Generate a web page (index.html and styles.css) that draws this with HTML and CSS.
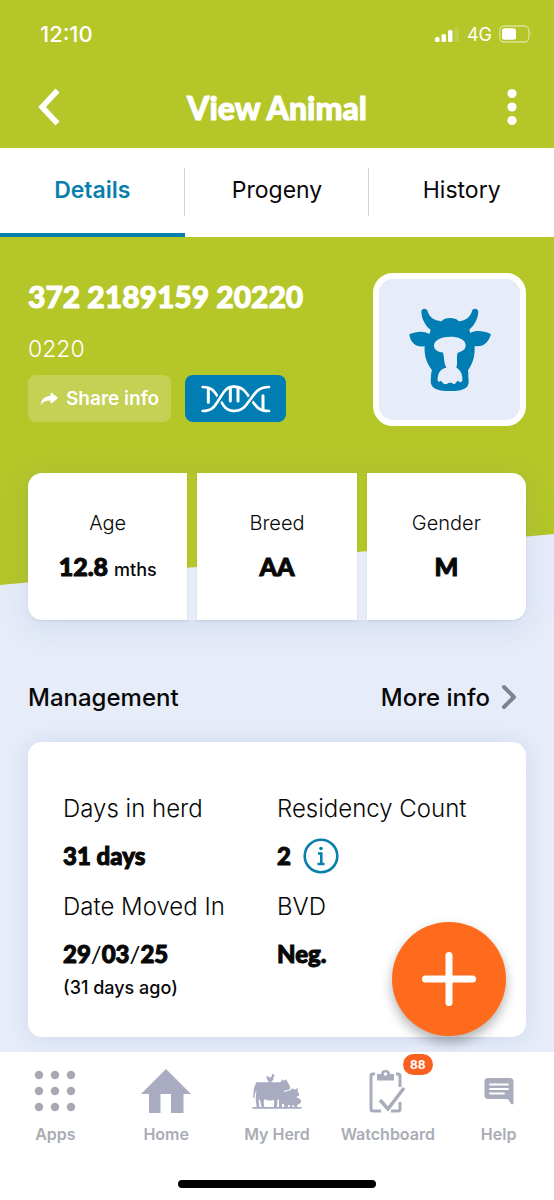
FILE: index.html
```html
<!DOCTYPE html>
<html lang="en">
<head>
<meta charset="utf-8">
<meta name="viewport" content="width=device-width, initial-scale=1">
<title>View Animal</title>
<link rel="stylesheet" href="styles.css">
</head>
<body>
<div class="app">
  <header class="top">
    <div class="status">
      <time class="clock">12:10</time>
      <div class="signals">
        <svg width="25" height="16" viewBox="0 0 25 16" fill="#fff" aria-hidden="true">
          <rect x="0" y="11" width="4.500" height="5" rx="1.500"/><rect x="6.500" y="8" width="4.500" height="8" rx="1.500"/><rect x="13" y="4" width="4.500" height="12" rx="1.500"/><rect x="19.500" y="1" width="4.500" height="15" rx="1.500" opacity=".15"/>
        </svg>
        <span>4G</span>
        <svg width="34" height="18" viewBox="0 0 34 18" aria-hidden="true">
          <rect x=".8" y="1" width="29" height="16" rx="4.500" fill="none" stroke="#fff" stroke-opacity=".5" stroke-width="1.300"/><rect x="3" y="3.300" width="14" height="11.400" rx="2.500" fill="#fff"/><path d="M31.500 6.500q1.800 2.500 0 5z" fill="#fff" opacity=".5"/>
        </svg>
      </div>
    </div>
    <div class="titlebar">
      <button class="icon-button" aria-label="Back"><svg width="24" height="38" viewBox="0 0 24 38" fill="none" stroke="#fff" stroke-width="5.500"><path d="M20.500 2.500 5 19l15.500 16.500"/></svg></button>
      <h1>View Animal</h1>
      <button class="icon-button" aria-label="More options"><svg width="10" height="38" viewBox="0 0 10 38" fill="#fff"><circle cx="5" cy="5.500" r="4.600"/><circle cx="5" cy="19" r="4.600"/><circle cx="5" cy="32.500" r="4.600"/></svg></button>
    </div>
  </header>

  <nav class="tabs" aria-label="Animal">
    <a class="tab active" href="#details" aria-current="page">Details</a>
    <a class="tab" href="#progeny">Progeny</a>
    <a class="tab" href="#history">History</a>
  </nav>

  <main class="content" id="details">
    <section class="identity">
      <div class="identity-text">
        <h2>372 2189159 20220</h2>
        <p class="short-id">0220</p>
        <div class="actions">
          <button class="share"><svg width="18" height="14" viewBox="0 0 18 14" fill="#fff" aria-hidden="true"><path d="M10.500 1.300Q11 .3 12 1l5.300 4.300q.8.700 0 1.400L12 11q-1 .7-1.500-.3V8.600Q4.500 8.300.5 13 .8 5 10.500 3.700z"/></svg>Share info</button>
          <button class="dna" aria-label="DNA"><svg width="70" height="28" viewBox="13 14 210 84" fill="none" stroke="#fff" stroke-linecap="round" stroke-width="8" aria-hidden="true">
            <path d="M35 24v42M101 22v40M124 22v40M199 46v42" stroke-width="9"/>
            <path d="M18 20c32 0 38 18 50 36s18 36 44 36"/>
            <path d="M112 19c28 0 36 18 50 37s22 36 55 36"/>
            <path d="M18 92c32 0 38-18 50-36s18-37 44-37M112 92c28 0 36-18 50-36s22-36 55-36" stroke="#007eb4" stroke-width="18" stroke-linecap="butt" stroke-dasharray="0 44 34 200"/>
            <path d="M18 92c32 0 38-18 50-36s18-37 44-37M112 92c28 0 36-18 50-36s22-36 55-36"/>
          </svg></button>
        </div>
      </div>
      <div class="avatar"><svg width="84" height="86" viewBox="142 138 252 258" role="img" aria-label="Cow">
        <path fill="#007eb4" d="M182 153c0-12 16-13 19-2 5 18 18 28 42 30 8-13 43-13 51 0 22-2 35-13 40-31 3-10 19-8 19 3-2 22-11 39-27 53l3 10c17-10 39-6 60 2 3 0 1 6-1 9-8 21-23 31-46 28 1 28-4 50-20 73 2 10 0 20 2 31 2 25-22 31-56 31s-59-6-58-31c2-13 0-22 4-31-16-21-24-45-22-72-25 4-43-9-46-36 22-9 42-11 60-1l4-12c-16-13-27-32-28-54z"/>
        <path fill="#e6ecf8" d="M220 254c0-34 92-36 95-3 1 14-10 20-24 24-5 15 1 31-4 45 11 6 20 19 18 40-5 6-9 3-13-1-5 3-7 7-10 10h-4c-4-5-15-5-19 0h-9c-3-3-7-8-10-10-5 6-9 3-9-1-1-22 10-36 26-38-9-16-5-34-11-46-15-1-26-9-26-20z"/>
      </svg></div>
    </section>

    <dl class="facts">
      <div class="fact"><dt>Age</dt><dd>12.8 <small>mths</small></dd></div>
      <div class="fact"><dt>Breed</dt><dd>AA</dd></div>
      <div class="fact"><dt>Gender</dt><dd>M</dd></div>
    </dl>

    <section class="management">
      <div class="section-head">
        <h3>Management</h3>
        <a href="#more">More info <svg width="16" height="26" viewBox="0 0 16 26" fill="none" stroke="#7d828c" stroke-width="4" stroke-linecap="round" stroke-linejoin="round" aria-hidden="true"><path d="m3 3 10 10L3 23"/></svg></a>
      </div>
      <dl class="card">
        <div><dt>Days in herd</dt><dd>31 days</dd></div>
        <div><dt>Residency Count</dt><dd>2 <button class="info" aria-label="About residency count"><svg width="36" height="36" viewBox="0 0 36 36" fill="none" stroke="#087fac" stroke-width="2.600"><circle cx="18" cy="18" r="16.300"/><path d="M15 15.500h3.300V26M14.500 26h7"/><circle cx="18" cy="10.500" r="1.800" fill="#087fac" stroke="none"/></svg></button></dd></div>
        <div><dt>Date Moved In</dt><dd>29<span class="slash">/</span>03<span class="slash">/</span>25</dd><dd class="ago">(31 days ago)</dd></div>
        <div><dt>BVD</dt><dd>Neg.</dd></div>
      </dl>
    </section>
  </main>

  <button class="fab" aria-label="Add"><svg width="54" height="54" viewBox="0 0 54 54" stroke="#fff" stroke-width="7" stroke-linecap="round"><path d="M27 3.500v47M3.500 27h47"/></svg></button>

  <footer class="bottom">
    <nav class="menu" aria-label="Main">
      <a href="#apps"><span class="glyph"><svg width="42" height="42" viewBox="0 0 42 42" fill="#a8a9b6"><g id="r"><circle cx="5" cy="5" r="4.200"/><circle cx="21" cy="5" r="4.200"/><circle cx="37" cy="5" r="4.200"/></g><use href="#r" y="16"/><use href="#r" y="32"/></svg></span>Apps</a>
      <a href="#home"><span class="glyph"><svg width="50" height="44" viewBox="0 0 50 44" fill="#a9abc0"><path d="M25 0 50 25h-7.500v19H30V25H19.500v19H8V25H0z"/></svg></span>Home</a>
      <a href="#herd"><span class="glyph"><svg width="50" height="36" viewBox="17 19 150 108" fill="#a9acc0">
        <path d="M18 121h148v5H18z"/>
        <path d="M60 30l5-2 4 5 6-2 3-10 5 3 2 4-3 3-1 8-6 6v4h-8v-5q-5-2-7-14z"/>
        <path d="M28 47h74l7-9 4 4 8-4 2 8 5 6 4 13-6 6h-10l-6 10-3 7v33h-9v-22l-4-2-2 24h-9v-22q-16 6-28-2l-3 9 2 15h-8l-6-23-3 1 2 22h-8l-3-24 2-27-5 14-1 10-4-2 3-26q1-11 5-12z"/>
        <path d="M106 78l26-7 7-6 6 4 9-5 0 10 4 9 0 4-12 4-28 20h-12z"/>
        <path d="M108 93l28-3 7 3 8-6 1 7 6 1 7 8-3 7-9 5-2 8h-7v-6l-5-2-2 8h-6v-8l-6 0-1 8h-9z"/>
      </svg></span>My Herd</a>
      <a href="#watchboard"><span class="glyph"><svg width="38" height="44" viewBox="0 0 38 44" fill="none" stroke="#a9acbb" stroke-width="3"><path d="M6 5H3.500Q2 5 2 7v33q0 2 2 2h8M22 42h7q2 0 2-2v-7M31 18V7q0-2-2-2h-2"/><path d="M8 11.500V5h4q0-4 4.500-4T21 5h4v6.500z" fill="#a9acbb" stroke="none"/><circle cx="16.500" cy="5" r="1.700" fill="#fff" stroke="none"/><path d="m11 31 8 9 16-21" stroke-width="3.500"/></svg><span class="badge">88</span></span>Watchboard</a>
      <a href="#help"><span class="glyph"><svg width="30" height="28" viewBox="0 0 30 28"><path fill="#a9acbb" d="M4 1h22q3.500 0 3.500 4v22q-2 1-3-1l-2.500-4H4q-3.500 0-3.500-4V5Q.5 1 4 1z"/><path d="M6 7.500h18M6 12h18M6 16.500h14" stroke="#fff" stroke-width="1.800" stroke-linecap="round"/></svg></span>Help</a>
    </nav>
    <div class="home-indicator"></div>
  </footer>
</div>
</body>
</html>
```
FILE: styles.css
```css
* { box-sizing: border-box; }
body { margin: 0; font-family: Inter, "Open Sans", sans-serif; color: #080808; background: #e6ecf8; }
h1, h2, h3, p, dl, dd { margin: 0; }
a { color: inherit; text-decoration: none; }
button { border: 0; padding: 0; background: none; font: inherit; color: inherit; cursor: pointer; }
svg { display: block; flex: none; }

.app { position: relative; isolation: isolate; min-height: 100vh; display: flex; flex-direction: column; }

.top { background: #b4c628; color: #fff; }
.status { display: flex; justify-content: space-between; align-items: center; height: 68px; padding: 0 21px 0 40px; }
.clock { font-size: 22px; font-weight: 500; }
.signals { display: flex; align-items: center; gap: 7px; font-size: 18px; }
.titlebar { display: flex; justify-content: space-between; align-items: center; height: 80px; padding: 0 37px 2px; }
.icon-button { width: 24px; display: flex; justify-content: flex-start; }
.icon-button:last-child { justify-content: flex-end; }
h1 { font: 900 32px Lato, sans-serif; -webkit-text-stroke: 1px currentColor; }

.tabs { display: grid; grid-template-columns: repeat(3, 1fr); background: #fff; }
.tab { position: relative; height: 89px; padding-bottom: 1px; display: flex; align-items: center; justify-content: center; font-size: 23px; border-bottom: 4px solid transparent; }
.tab + .tab::before { content: ""; position: absolute; left: -1px; top: 20px; height: 48px; border-left: 1px solid #d5d5d5; }
.tab.active { color: #087fac; font-weight: 600; border-color: #087fac; }

.content { position: relative; flex: 1; padding: 36px 28px 15px; }
.content::before { content: ""; position: absolute; z-index: -1; inset: 0 0 auto; height: 348px; background: #b4c628; clip-path: polygon(0 0, 100% 0, 100% calc(100% - 51px), 0 100%); }

.identity { display: flex; justify-content: space-between; color: #fff; }
.identity-text { display: flex; flex-direction: column; }
h2 { font: 900 30px/46px Lato, sans-serif; -webkit-text-stroke: 1px currentColor; }
.short-id { margin: 12px 0 8px; font-size: 23px; line-height: 36px; font-weight: 300; }
.actions { display: flex; gap: 14px; }
.share, .dna { height: 47px; border-radius: 8px; display: flex; align-items: center; justify-content: center; }
.share { padding: 0 12px; gap: 8px; background: #c4d154; font-size: 19px; font-weight: 600; }
.dna { width: 101px; background: #007eb4; }
.avatar { width: 153px; height: 153px; flex: none; display: flex; align-items: center; justify-content: center; border: 6px solid #fff; border-radius: 20px; background: #e6ecf8; }

.facts { display: grid; grid-template-columns: repeat(3, 1fr); gap: 10px; margin-top: 47px; box-shadow: 0 8px 30px rgba(90, 120, 190, .14); border-radius: 14px; }
.fact { height: 147px; padding-top: 36px; background: #fff; text-align: center; box-shadow: 0 1px 2px rgba(90, 120, 160, .15); }
.fact:first-child { border-radius: 14px 0 0 14px; }
.fact:last-child { border-radius: 0 14px 14px 0; }
.fact dt { font-size: 20px; line-height: 28px; font-weight: 300; }
.fact dd { margin-top: 11px; font: 900 25px/36px Lato, sans-serif; -webkit-text-stroke: 1px currentColor; }
.fact small { font: 500 18px Inter, sans-serif; -webkit-text-stroke: 0; }

.section-head { display: flex; justify-content: space-between; align-items: center; height: 40px; margin: 57px 9px 25px 0; font-size: 24px; }
h3 { font-size: 24px; font-weight: 500; }
.section-head a { display: flex; align-items: center; gap: 11px; font-weight: 500; }

.card { display: grid; grid-template-columns: 214px 1fr; height: 295px; padding: 49px 35px 0; align-content: start; background: #fff; border-radius: 14px; box-shadow: 0 1px 20px rgba(90, 120, 190, .16); }
.card > div { min-height: 98px; }
.card dt { font-size: 24px; line-height: 36px; font-weight: 300; white-space: nowrap; }
.card dd { display: flex; align-items: center; height: 40px; margin-top: 9px; font: 900 24px/40px Lato, sans-serif; -webkit-text-stroke: 1px currentColor; }
.card .slash { font-weight: 400; -webkit-text-stroke: 0; }
.card .ago { height: 28px; margin: 0; font: 500 18px/28px Inter, sans-serif; -webkit-text-stroke: 0; }
.info { margin-left: 12px; }

.fab { position: absolute; right: 48px; bottom: 164px; width: 114px; height: 114px; border-radius: 50%; display: flex; align-items: center; justify-content: center; background: #ff6b1c; box-shadow: 0 6px 12px rgba(0, 0, 0, .3); }

.bottom { height: 148px; padding-top: 17px; background: #fff; display: flex; flex-direction: column; align-items: center; justify-content: space-between; }
.menu { width: 100%; display: grid; grid-template-columns: repeat(5, 1fr); }
.menu a { display: flex; flex-direction: column; align-items: center; gap: 9px; font-size: 16px; line-height: 24px; font-weight: 600; color: #a9acb5; white-space: nowrap; }
.glyph { position: relative; height: 44px; display: flex; align-items: center; }
.badge { position: absolute; left: 34px; top: -15px; width: 30px; line-height: 21px; border-radius: 11px; background: #f9601f; color: #fff; font-size: 12px; font-weight: 700; text-align: center; }
.home-indicator { width: 198px; height: 8px; margin-bottom: 12px; border-radius: 4px; background: #000; }
```
